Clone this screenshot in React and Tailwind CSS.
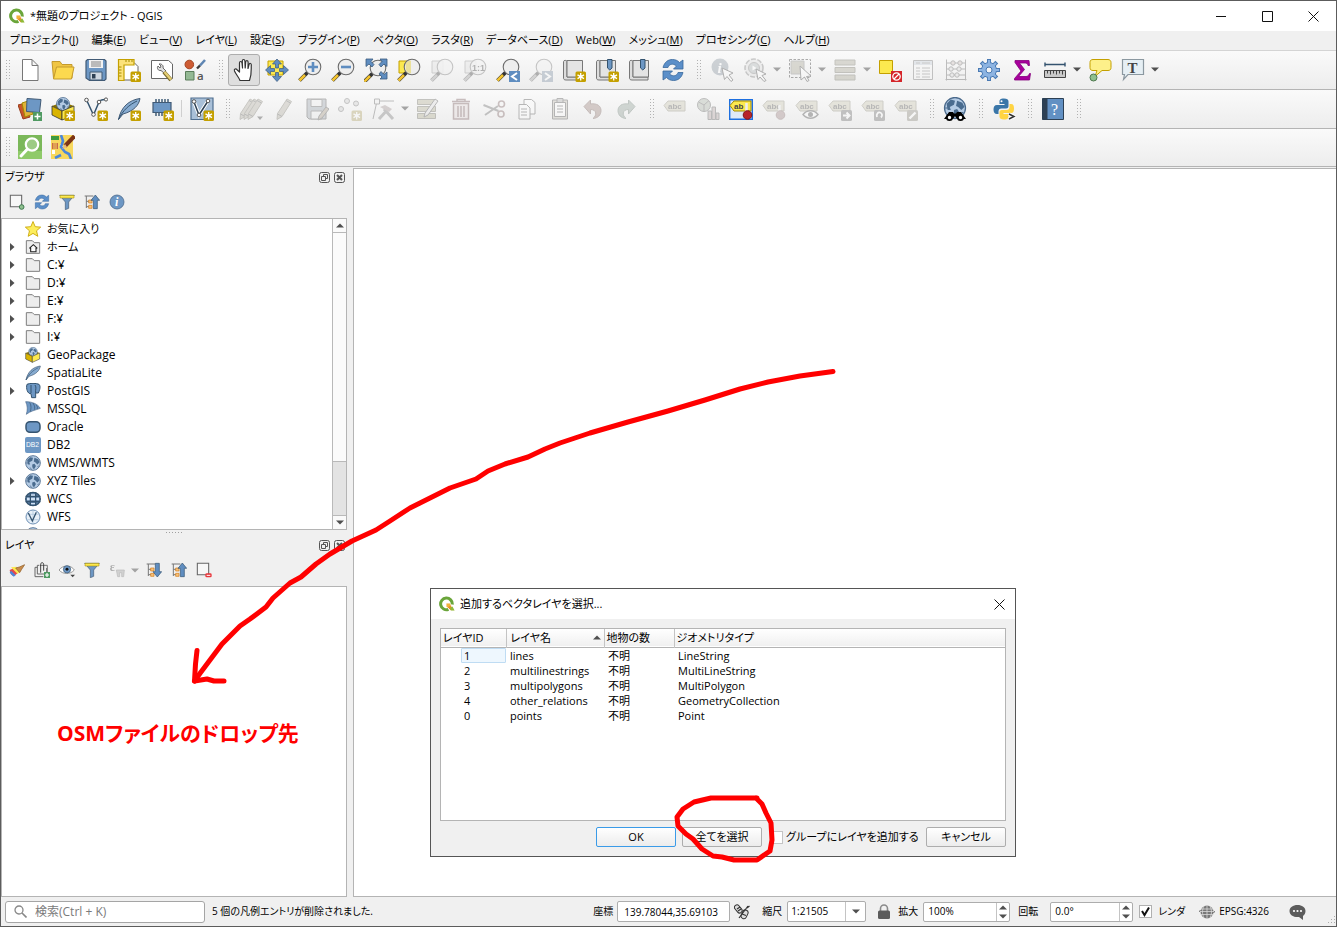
import React from "react";

/* ---------- shared drawing parts ---------- */

function Svg({ children, size = 24, off = false }) {
  return (
    <svg width={size} height={size} viewBox="0 0 24 24" fill="none" aria-hidden="true" className={off ? "shrink-0 grayscale-[60%] opacity-35" : "shrink-0"}>
      {children}
    </svg>
  );
}

const Star = () => (
  <g>
    <rect x="13.5" y="13.5" width="10.5" height="10.5" rx="1.5" fill="#c4a000" />
    <path d="M18.7 15v7.500M15.500 16.900l6.500 3.700M22 16.900l-6.500 3.700" stroke="#fff" strokeWidth="1.300" />
    <circle cx="18.7" cy="18.7" r="1.6" fill="#fff" />
  </g>
);

const Lens = ({ gold = true, children }) => (
  <g>
    <path d="M1.500 22.500l8-8" stroke="#333" strokeWidth="3.800" />
    <path d="M1.500 22.500l5.500-5.500" stroke={gold ? "#f3c32e" : "#999"} strokeWidth="2.600" />
    <circle cx="15" cy="9" r="7.8" fill="#ececec" fillOpacity=".85" stroke="#6c6c6c" strokeWidth="1.1" />
    {children}
  </g>
);

const Tag = ({ bright }) => (
  <g>
    <path d="M1 8.500l4-4.500h17v10H5z" fill={bright ? "#fce94f" : "#cfc48a"} stroke={bright ? "#a38a00" : "#8d865c"} />
    <text x="5" y="12" fontSize="8" fontWeight="700" fontFamily="Liberation Sans, sans-serif" fill="#444">{bright ? "ab" : "abc"}</text>
  </g>
);

const Globe = ({ cx = 12, cy = 12, r = 9.5 }) => (
  <g transform={`translate(${cx} ${cy}) scale(${r / 10})`}>
    <circle r="10" fill="#b4cbe4" stroke="#4b6a8c" strokeWidth="1.200" />
    <path d="M-8-4l4-4 4 1-1 4-4 2 1 3-3 0zM-1 2l3-1 2 3-2 4-2 0-1-3zM2-7l5 2 2 4-3 3-3-3-2-1z" fill="#4a6c8f" />
    <path d="M-9.500 0h4M-4 6l2 3M6 5l2-1" stroke="#4b6a8c" />
  </g>
);

const Pencil = ({ x = 0 }) => (
  <g transform={`translate(${x} 0)`}>
    <path d="M5 22.500l.5-6L15 2l4.500 2.500L10 19.500z" fill="#b5ab8a" stroke="#7a7356" strokeWidth="1" />
    <path d="M14 3.500l4.500 2.500M5.500 17l4.500 2.500" stroke="#555" />
  </g>
);

const MapSheet = () => (
  <g>
    <path d="M1.500 3.500C1.500 2 5 2 5 3.500V19h15v3H4c-2 0-2.500-1-2.500-2z" fill="#ddd" stroke="#777" />
    <path d="M5 2.500h15.500V19H5z" fill="#e4e4e4" stroke="#777" />
  </g>
);

/* ---------- icons ---------- */

const icons = {
  newFile: <path d="M4.500 1.500H14L20 7.500V22.500H4.500zM14 1.500V7.500H20" fill="#fff" stroke="#777" strokeLinejoin="round" />,
  open: (
    <g stroke="#c49a2c" strokeLinejoin="round">
      <path d="M1 3.500h8l2 3h10V20H2.500z" fill="#f0c542" />
      <path d="M5.500 9H23l-2.500 12H2.500z" fill="#fcd94f" />
    </g>
  ),
  save: (
    <g>
      <path d="M3.500 1.500h17l1.500 1.500V21l-1.500 1.500h-15L2 20V3z" fill="#6d97c4" stroke="#415a75" strokeWidth="1.200" />
      <path d="M5 2h14v8H5z" fill="#f2f2f2" />
      <path d="M7 4h10M7 6h10M7 8h10" stroke="#777" strokeWidth=".9" />
      <path d="M6 14h12v8H6z" fill="#cfd8e2" stroke="#415a75" />
      <path d="M8 16h3.500v4.500H8z" fill="#2d4054" />
    </g>
  ),
  layout: (
    <g>
      <path d="M6 4.500h11l4 4V22H6z" fill="#fff" stroke="#666" />
      <path d="M1.500 1.500h15.500V7H7v15.500H1.500z" fill="#fce27a" stroke="#c4a000" strokeWidth="1.200" />
      <path d="M2 9h2.500M2 12h2.500M2 15h2.500M2 18h2.500M9 2v2M12 2v2M15 2v2" stroke="#a38a00" />
      <Star />
    </g>
  ),
  settings: (
    <g>
      <path d="M1.500 2.500h17L22.500 6v14.500h-21z" fill="#fff" stroke="#666" />
      <path d="M8 8c-1.500 2 0 5 3 4.500L14 15l2-2-3-3c.8-3-2-4.500-4-4l2 2-1 2z" fill="#e0e0e0" stroke="#666" />
      <path d="M14 14l7 8" stroke="#7a6a2c" strokeWidth="4" />
      <path d="M14.500 14l6.500 7.500" stroke="#e6cf74" strokeWidth="2.400" />
    </g>
  ),
  style: (
    <g>
      <circle cx="6.300" cy="6.500" r="4.300" fill="#cd5c33" stroke="#a3431f" />
      <path d="M22 2l-5 5.500" stroke="#5f86b3" strokeWidth="2.600" />
      <path d="M17 7.500l-3 3" stroke="#3a3a3a" strokeWidth="2.400" />
      <path d="M2.500 13.500h8.500v8.500H2.500z" fill="#94b994" stroke="#5a7d5a" />
      <text x="14" y="22" fontSize="11.500" fontFamily="Open Sans, sans-serif" fontWeight="600" fill="#555">a</text>
    </g>
  ),
  hand: (
    <path d="M8 22.500c-1-3-4-6-5.500-9.500-.7-2 1.300-3 2.500-1.300L7.500 14V5c0-2 2.200-2 2.500 0l.5 5-.2-7c0-2 2.500-2 2.600 0l.3 7 .5-6c.2-2 2.500-1.700 2.400.2L16 10.500l1-4c.5-1.700 2.500-1.200 2.300.5C19 11 20 16 17.500 22.500z" fill="#fff" stroke="#333" strokeWidth="1.200" strokeLinejoin="round" />
  ),
  pan: (
    <g>
      <path d="M3 3h15v14H3z" fill="#fce94f" stroke="#c4a000" />
      <path d="M12 1l4.500 5H13.500v4h-3V6h-3zM12 23.500l4.500-5h-3v-4h-3v4h-3zM.5 12l5-4.500v3h4v3h-4v3zM23.500 12l-5-4.500v3h-4v3h4v3z" fill="#5f8dc0" stroke="#3a5a7d" strokeWidth=".7" />
    </g>
  ),
  zoomIn: <Lens><path d="M15 4v10M10 9h10" stroke="#5f8dc0" strokeWidth="2.600" /></Lens>,
  zoomOut: <Lens><path d="M10 9h10" stroke="#5f8dc0" strokeWidth="2.600" /></Lens>,
  zoomFull: (
    <g>
      <g transform="translate(-1 1)"><Lens /></g>
      <path d="M2 1h7L7 3.500l3 3L8 9 5 6 2 8.500zM23 1h-7l2 2.500-3 3L17 9l3-3 3 2.500zM23 21h-7l2-2-3-3 2-2.500 3 3 3-2.500z" fill="#5f8dc0" stroke="#3a5a7d" strokeWidth=".8" />
    </g>
  ),
  zoomSel: <g><path d="M2 3h11v12H2z" fill="#fce94f" stroke="#c4a000" /><Lens><path d="M9 5a7 7 0 0 1 5-2.500v13A7 7 0 0 1 9 12z" fill="#e9dd80" fillOpacity=".7" /></Lens></g>,
  zoomLayer: <g><path d="M2 3h11v12H2z" fill="#ddd" stroke="#888" /><Lens gold={false} /></g>,
  zoomNative: <g><path d="M2 3h11v12H2z" fill="#ddd" stroke="#888" /><Lens gold={false}><text x="9" y="12.500" fontSize="9" fontWeight="700" fontFamily="Liberation Sans, sans-serif" fill="#333">1:1</text></Lens></g>,
  zoomPrev: <g><Lens /><path d="M13 13h11v11H13z" fill="#5f8dc0" /><path d="M21 15l-5 3.500 5 3.500" stroke="#fff" strokeWidth="2" /></g>,
  zoomNext: <g><Lens gold={false} /><path d="M13 13h11v11H13z" fill="#5f8dc0" /><path d="M16 15l5 3.500-5 3.500" stroke="#fff" strokeWidth="2" /></g>,
  mapNew: <g><MapSheet /><Star /></g>,
  markNew: <g><MapSheet /><path d="M12.500 1.500H17V10l-2.200 2-2.300-2z" fill="#6d97c4" stroke="#34536f" /><Star /></g>,
  marks: <g><MapSheet /><path d="M12.500 1.500H17V10l-2.200 2-2.300-2z" fill="#6d97c4" stroke="#34536f" /></g>,
  refresh: (
    <g fill="#5b8fc9" stroke="#39689c" strokeWidth=".8" strokeLinejoin="round">
      <path d="M2 9.500C3.500 4 7 1.500 11.500 1.500c3 0 5 1 7 3L22 2v9h-9.500l3-3C12 5 8 6 7 9.500z" />
      <path d="M22 14.500C20.500 20 17 22.500 12.500 22.500c-3 0-5-1-7-3L2 22v-9h9.500l-3 3c3.500 3 7.500 2 8.500-1.500z" />
    </g>
  ),
  identify: <g><circle cx="10" cy="9" r="8.500" fill="#6f8dad" /><text x="7.500" y="14.500" fontSize="15" fontWeight="700" fontStyle="italic" fontFamily="Liberation Serif, serif" fill="#fff">i</text><path d="M12 10l11 5-4 2 4 5-2 1.500-4-5-2.500 3z" fill="#fff" stroke="#333" /></g>,
  action: <g><circle cx="11" cy="10" r="9" fill="#ddd" stroke="#777" strokeWidth="1.600" strokeDasharray="5 1.500" /><circle cx="11" cy="10" r="5.500" fill="#9fb0b3" stroke="#777" /><path d="M9.500 7.500l4 2.500-4 2.500z" fill="#fff" /><path d="M13 11l10 5-4 1.500 4 5-2 1-4-4.500-2 2.500z" fill="#fff" stroke="#333" /></g>,
  select: <g><path d="M1.500 1.500h21v18h-21z" stroke="#222" strokeDasharray="2.500 1.500" /><path d="M3 3h13v13H3z" fill="#a9a172" stroke="#777" /><path d="M12 8l11 10-4.500.5 2.500 4-2 1-2.500-4.500L13 22z" fill="#fff" stroke="#333" /></g>,
  selectForm: <path d="M2 2h20v5H2zM2 9.500h20v5H2zM2 17h20v5H2z" fill="#a9a172" stroke="#6d6848" />,
  deselect: <g><path d="M1.500 2.500h13v13h-13z" fill="#fce94f" stroke="#c4a000" /><path d="M13 13h11v11H13z" fill="#d4252a" /><circle cx="18.500" cy="18.500" r="3.700" stroke="#fff" strokeWidth="1.300" /><path d="M16 21l5-5" stroke="#fff" strokeWidth="1.300" /></g>,
  tableIcon: <g><path d="M2.500 2.500h19v19h-19z" fill="#f5f5f5" stroke="#666" /><path d="M3 3h18v4H3z" fill="#b7cde4" /><path d="M5 5h4M11 5h8M5 10h4M11 10h8M5 13h4M11 13h8M5 16h4M11 16h8M5 19h4M11 19h8" stroke="#777" /></g>,
  abacus: <g stroke="#555"><path d="M2.500 1.500v21M21.500 1.500v21M1.500 21.500h21M2 5h20M2 11h20M2 17h20" /><g fill="#d9b8b0"><circle cx="9" cy="5" r="2.200" /><circle cx="16" cy="5" r="2.200" /></g><g fill="#d9d9d9"><circle cx="7" cy="11" r="2.200" /><circle cx="15" cy="11" r="2.200" /><circle cx="8" cy="17" r="2.200" /><circle cx="13" cy="17" r="2.200" /></g></g>,
  gear: (
    <g>
      <path d="M12 1v22M1 12h22M4.200 4.200l15.600 15.600M19.800 4.200L4.200 19.800" stroke="#4a7ab3" strokeWidth="4" />
      <circle cx="12" cy="12" r="7.500" fill="#8db4e2" stroke="#4a7ab3" />
      <path d="M12 2v20M2 12h20M5 5l14 14M19 5L5 19" stroke="#8db4e2" strokeWidth="2.200" />
      <circle cx="12" cy="12" r="6.500" fill="#8db4e2" />
      <circle cx="12" cy="12" r="3" fill="#f5f5f5" stroke="#4a7ab3" />
    </g>
  ),
  sigma: <path d="M5 2.500h14l.5 5h-1.500c-.5-2-1.500-2.500-3-2.500h-5.500l5 6.500-6 7H16c2 0 2.500-1 3.500-3h1L19.500 22H4.500v-1.500L11 13 5 4.500z" fill="#a8009c" stroke="#84007c" strokeWidth=".8" />,
  measure: <g><path d="M2 6.500h20M2 4.500v4M22 4.500v4" stroke="#34536f" strokeWidth="1.400" /><path d="M1.500 12.500h21v7h-21z" fill="#c9c9c9" stroke="#444" /><path d="M4.500 12.500v3M7.500 12.500v4M10.500 12.500v3M13.500 12.500v4M16.500 12.500v3M19.500 12.500v4" stroke="#444" /></g>,
  mapTip: <g><path d="M5 1.500h15c2 0 3 1.500 3 3v5c0 2-1 3-3 3h-6l-7 6 2-6H5c-2 0-3-1-3-3v-5c0-2 1-3 3-3z" fill="#fdf08a" stroke="#c4a000" /><circle cx="5.500" cy="19.500" r="3.500" fill="#8fc08f" stroke="#4e774e" /></g>,
  textNote: <g><path d="M1.500 1.500h21v15H7l-4.500 5 1-5h-2z" fill="#e6eff4" stroke="#8b98a0" strokeWidth="1.200" /><text x="6.500" y="14.500" fontSize="15" fontFamily="Liberation Serif, serif" fontWeight="700" fill="#444">T</text></g>,

  dataSource: <g><path d="M0 8l8-2 4 14-7 2z" fill="#c9562b" stroke="#983d1c" /><path d="M4 6l9-3 2 14-8 3z" fill="#e0b33a" stroke="#a38a00" /><path d="M9 1.500l14 1-1.500 13-13-1z" fill="#6d97c4" stroke="#415a75" /><path d="M15 15h9v9h-9z" fill="#4f9a62" /><path d="M19.500 16.500v6M16.500 19.500h6" stroke="#fff" strokeWidth="1.500" /></g>,
  geopackage: <g><path d="M1 9l11-4 10 4-11 5z" fill="#8a7200" /><Globe cx={12} cy={7} r={6.500} /><path d="M1 9l10 5v9L1 18z" fill="#d9b400" stroke="#333" strokeWidth=".8" /><path d="M11 14l11-5v9l-11 5z" fill="#fce94f" stroke="#333" strokeWidth=".8" /></g>,
  geopackageNew: <g><path d="M1 9l11-4 11 4-12 5z" fill="#8a7200" /><Globe cx={12} cy={7} r={6.500} /><path d="M1 9l10 5v9L1 18z" fill="#d9b400" stroke="#333" strokeWidth=".8" /><path d="M11 14l12-5v9l-12 5z" fill="#fce94f" stroke="#333" strokeWidth=".8" /><Star /></g>,
  shape: <g stroke="#34536f"><path d="M3 4l6.500 14L15 5c1-2 3-2.500 6-2.500" strokeWidth="1.500" /><g fill="#fff" stroke="#555"><circle cx="2.500" cy="3" r="1.800" /><circle cx="9.500" cy="17.500" r="1.800" /><circle cx="15" cy="5" r="1.800" /><circle cx="22" cy="2.500" r="1.600" /></g><g stroke="none"><Star /></g></g>,
  feather: <g><path d="M1.500 22.500C4 10 12 3 23 1.500 22 8 17 14 6 17z" fill="#87abd0" stroke="#415a75" /><path d="M1.500 22.500C6 13 12 8 20 4" stroke="#34536f" /></g>,
  featherNew: <g><path d="M1.500 22.500C4 10 12 3 23 1.500 22 8 17 14 6 17z" fill="#87abd0" stroke="#415a75" /><path d="M1.500 22.500C6 13 12 8 20 4" stroke="#34536f" /><Star /></g>,
  memory: <g><path d="M6 2v17M9 2v17M12 2v17M15 2v17M18 2v17" stroke="#34536f" strokeWidth="1.400" /><path d="M3 5.500h18v10H3z" fill="#6d97c4" stroke="#415a75" strokeWidth="1.200" /><Star /></g>,
  virtual: <g><path d="M1 1h22v21.500H1z" fill="#a9c0d8" stroke="#506f90" strokeWidth="1.200" /><path d="M4 5l5 13 9-14" stroke="#fff" strokeWidth="3.500" /><path d="M4 5l5 13 9-14" stroke="#2d4054" strokeWidth="1.500" /><g fill="#fff" stroke="#555"><circle cx="4" cy="4.500" r="1.800" /><circle cx="9" cy="18" r="1.800" /><circle cx="18" cy="4" r="1.800" /></g><Star /></g>,

  pencils: <g><Pencil x={-4} /><Pencil x={0} /><Pencil x={4} /></g>,
  pencil: <Pencil />,
  saveEdit: <g><path d="M2 2h19v20H4l-2-2z" fill="#8ba1ba" stroke="#444" /><path d="M6 2.500h11v7H6zM6 14h11v8H6z" fill="#eee" stroke="#555" /><path d="M13 23l1-4 7-9 3 2-7 9z" fill="#b3935f" stroke="#444" /></g>,
  points: <g><g fill="#ccc" stroke="#666"><circle cx="9" cy="4" r="2.500" /><circle cx="18" cy="6.500" r="2.500" /><circle cx="3" cy="12" r="2.500" /></g><Star /></g>,
  vertex: <g><path d="M2 22L6 4h17" stroke="#555" /><path d="M3.500 2h5v5h-5z" fill="#eee" stroke="#555" /><path d="M8 22L18 11M13 12l9 10" stroke="#777" strokeWidth="3" /><path d="M9 10l5-2 7 4-3 3z" fill="#a88" /></g>,
  multiEdit: <g><path d="M1.500 2.500h18v5h-18zM1.500 9.500h18v5h-18zM1.500 16.500h18v5h-18z" fill="#b5ad62" stroke="#676547" /><path d="M8 20l1-4L19 2l3 2-10 14z" fill="#ddd" stroke="#444" /></g>,
  trash: <g fill="none" stroke="#94494c" strokeWidth="1.500"><path d="M4.500 6.500h15V22h-15z" fill="#eed3d3" /><path d="M3 4.500h18M8 4.500v-2h8v2M9 9v11M12 9v11M15 9v11" /></g>,
  cut: <g><path d="M1.500 8l15 6M3 18L16 9" stroke="#666" strokeWidth="2" /><g stroke="#955" strokeWidth="1.600"><circle cx="19.500" cy="7" r="3" /><circle cx="19" cy="17" r="3" /></g></g>,
  copy: <g fill="#fff" stroke="#444"><path d="M9 2.500h7.500l3.500 3V17H9z" /><path d="M4 7.500h7.500l3.500 3.500v11H4z" /><path d="M6 12h6M6 15h6M6 18h6" /></g>,
  paste: <g stroke="#444"><path d="M4.500 3h15v19h-15z" fill="#c6bd9f" /><path d="M6.500 5.500h11v14h-11z" fill="#fff" /><path d="M9 1.500h6v4H9z" fill="#aaa" /><path d="M9 9h6M9 12h6M9 15h6" /></g>,
  undo: <path d="M3 9.500l6.500-6.500v4C16 6 20 9 20 13.500S17 21 12 21.500c4-3 4-9-2.500-9V17z" fill="#b87460" stroke="#8b4e40" />,
  redo: <path d="M21 9.500L14.500 3v4C8 6 4 9 4 13.500S7 21 12 21.500c-4-3-4-9 2.500-9V17z" fill="#79a08a" stroke="#4e7a62" />,

  label: <Tag />,
  diagram: <g stroke="#555"><circle cx="8" cy="8" r="6.500" fill="#9db392" /><path d="M8 8l5-4.500M8 8L2.500 5M8 8v6.500" /><path d="M12 14h3.500v8.500H12zM16 10h3.500v12.500H16zM20 16h3v6.500h-3z" fill="#c79c9c" /></g>,
  pinLabel: <g><path d="M.7 2.700h22.600v19.600H.7z" stroke="#1d6fe0" strokeWidth="1.400" fill="#dfe9f7" /><Tag bright /><path d="M17.500 6v9" stroke="#eee" strokeWidth="2.500" /><circle cx="18.500" cy="18" r="4.300" fill="#b8242a" stroke="#7d1418" /></g>,
  labelPin: <g><Tag /><path d="M17.500 8v8" stroke="#eee" strokeWidth="2.500" /><circle cx="18.500" cy="18" r="4.300" fill="#b77" stroke="#955" /></g>,
  labelEye: <g><Tag /><path d="M8 17.500c4-5 11-5 15 0-4 5-11 5-15 0z" fill="#fff" stroke="#444" strokeWidth="1.400" /><circle cx="15.500" cy="17.500" r="2.500" fill="#444" /></g>,
  labelMove: <g><Tag /><rect x="13" y="13" width="11" height="11" rx="1.500" fill="#666" /><path d="M15 18.500h6M18.500 15.500l3 3-3 3" stroke="#fff" strokeWidth="2" /></g>,
  labelRotate: <g><Tag /><rect x="13" y="13" width="11" height="11" rx="1.500" fill="#666" /><path d="M16 20c-1-3 1-5 3-4.500s3 3 1 5" stroke="#fff" strokeWidth="1.800" /></g>,
  labelEdit: <g><Tag /><rect x="13" y="13" width="11" height="11" rx="1.500" fill="#8a8463" /><path d="M15.500 21.500l6-6" stroke="#fff" strokeWidth="2.400" /></g>,
  metaSearch: <g><Globe cx={12} cy={11} r={10.500} /><path d="M6 15h4l1 1.500h2L14 15h4l5 7h-9l-2-3-2 3H1z" fill="#000" /><circle cx="6.500" cy="20.500" r="2.600" fill="#fff" stroke="#000" strokeWidth="1.800" /><circle cx="17.500" cy="20.500" r="2.600" fill="#fff" stroke="#000" strokeWidth="1.800" /></g>,
  python: (
    <g>
      <path d="M12 1.500c-4 0-4.500 1.500-4.500 3V7h5v1H5C2.500 8 1.500 10 1.500 12.500S2.500 17 5 17h1.500v-2.500c0-2 1-3 3-3H14c2 0 2.500-1 2.500-2.500V4.500c0-2-1.500-3-4.500-3z" fill="#3a76a8" />
      <path d="M12 22.500c4 0 4.500-1.500 4.500-3V17h-5v-1H19c2.500 0 3-2 3-4.500S21.500 7 19 7h-1.500v3c0 2-1 3-3 3H10c-2 0-2.500 1-2.500 2.500v4c0 2 1.500 3 4.500 3z" fill="#ffd443" />
      <circle cx="9.500" cy="4.300" r="1" fill="#fff" />
      <path d="M17 17l5 2.500-5 2.500" stroke="#fff" strokeWidth="3.500" /><path d="M17 17l5 2.500-5 2.500" stroke="#333" strokeWidth="1.500" />
    </g>
  ),
  help: <g><path d="M1.500 1.500h21v21h-21z" fill="#6290c3" stroke="#2d4054" /><path d="M1.500 1.500h5v21h-5z" fill="#2d4054" /><text x="10" y="17.500" fontSize="16" fontFamily="Liberation Serif, serif" fill="#fff">?</text></g>,

  osmFind: <g><path d="M0 0h24v24H0z" fill="#7bb85a" /><path d="M0 16h24v8H0z" fill="#8fca69" /><path d="M3 21l6-6.500" stroke="#fff" strokeWidth="3" strokeLinecap="round" /><circle cx="14" cy="9.500" r="6.200" stroke="#fff" strokeWidth="2.200" fill="#9ccb84" /></g>,
  osmEdit: <g><path d="M0 0h22v24H0z" fill="#f7d85e" /><path d="M0 1h8v4H0z" fill="#3f9b3f" /><path d="M1 15h3v4H1zM9 9h3v3H9z" fill="#fff" /><path d="M10 0l2 6-2 6 4 5 4 2 2 5M10 20l-6 3" stroke="#4a87dc" strokeWidth="2.600" /><path d="M1 8h6v6H1z" fill="#c96a4a" /><path d="M3 8v6M5 8v6" stroke="#f7d85e" /><path d="M23.500 1L14 11" stroke="#7c3414" strokeWidth="4" /><path d="M14 9l-3 5 5-2z" fill="#e4b57e" /></g>,

  addLayer: <g><path d="M2 2h17v17H2z" stroke="#666" strokeWidth="1.600" fill="#f7f7f7" /><circle cx="19" cy="19.500" r="3.500" fill="#8fc08f" stroke="#3f7a4f" strokeWidth="1.500" /></g>,
  removeLayer: <g><path d="M2 2h17v17H2z" stroke="#666" strokeWidth="1.600" fill="#f7f7f7" /><rect x="14" y="17" width="9.500" height="6" rx="2" fill="#e8363b" /><path d="M16 20h5.500" stroke="#fff" strokeWidth="1.500" /></g>,
  filter: <g><path d="M1 2h22l-8.500 10v9.500l-5 2V12z" fill="#6d97c4" stroke="#415a75" /><path d="M1.500 2h21v4h-21z" fill="#fce94f" stroke="#a38a00" strokeWidth=".8" /></g>,
  collapse: <g><path d="M1 3h13M3.500 3v18M3.500 11h4M3.500 19h4" stroke="#777" strokeWidth="1.500" /><path d="M7 9h5v4.500H7zM7 17h5v4.500H7z" fill="#f6c27c" stroke="#d57a13" /><path d="M17 1.500l6.500 8H20V22h-6V9.500h-3.500z" fill="#5f8dc0" stroke="#34536f" /></g>,
  expand: <g><path d="M1 3h13M3.500 3v18M3.500 11h4M3.500 19h4" stroke="#777" strokeWidth="1.500" /><path d="M7 9h5v4.500H7zM7 17h5v4.500H7z" fill="#f6c27c" stroke="#d57a13" /><path d="M17 22.500l6.500-8H20V2h-6v12.500h-3.500z" fill="#5f8dc0" stroke="#34536f" /></g>,
  info: <g><circle cx="12" cy="12" r="10.500" fill="#6d97c4" stroke="#4b6a8c" strokeWidth="1.200" /><text x="9" y="18" fontSize="18" fontWeight="700" fontStyle="italic" fontFamily="Liberation Serif, serif" fill="#fff">i</text></g>,
  brush: <g><path d="M1 12l9-4 6 6-8 7c-4 0-6-3-7-9z" fill="#e5484d" /><path d="M3 8l8-1 6 6-4 5z" fill="#fce94f" /><path d="M1 16l6 6 3-2-7-7z" fill="#4a87dc" /><path d="M10 9l6 7 3-5 4.500-7-8 3.500z" fill="#c98c4a" stroke="#8d5a24" /></g>,
  addGroup: <g><path d="M5 8H1.500v14H14M8 5H5v13h14V9" stroke="#666" strokeWidth="1.500" /><path d="M9 5h11v12" stroke="#777" strokeWidth="1.500" /><path d="M10 16V4c0-4 4.500-4 4.500 0v9" stroke="#333" strokeWidth="1.400" /><path d="M15 15h9v9h-9z" fill="#4f9a62" /><path d="M19.500 16.500v6M16.500 19.500h6" stroke="#fff" strokeWidth="1.800" /></g>,
  eye: <g><path d="M0 12C6 4 18 4 23 12 17 19 6 19 0 12z" fill="#fff" stroke="#999" strokeWidth="1.500" /><circle cx="12" cy="11" r="5.500" fill="#6d97c4" stroke="#34536f" /><circle cx="12" cy="11" r="2.200" fill="#111" /><path d="M17 19h7l-3.500 4z" fill="#444" /></g>,
  expression: <g><text x="1" y="14" fontSize="18" fontWeight="700" fontFamily="Liberation Serif, serif" fill="#333">ε</text><path d="M11 12h12l-1 10h-3v-6h-3v6h-3z" fill="#999" stroke="#555" /></g>,

  star: <path d="M12 .8l3.300 7.700 8.200.7-6.200 5.500 1.900 8.300L12 18.600 4.800 23l1.900-8.300L.5 9.200l8.200-.7z" fill="#fdee5c" stroke="#c9a400" strokeWidth="1.300" strokeLinejoin="round" />,
  folder: <path d="M2 2.500h9l3 3h8v16H2z" fill="#ededed" stroke="#7d7d7d" strokeWidth="1.500" strokeLinejoin="round" />,
  home: <g><path d="M2 2.500h9l3 3h8v16H2z" fill="#ededed" stroke="#7d7d7d" strokeWidth="1.500" /><path d="M6.500 14L12.500 8.500l6 5.500M8.500 13v6h8v-6" stroke="#222" strokeWidth="1.600" fill="#fff" /></g>,
  postgis: <g><path d="M3 2c4-2 14-2 18 0 3 3 1 9-1 13h-4v7h-6l-1-6c-5 1-8-8-6-14z" fill="#6d97c4" stroke="#34536f" strokeWidth="1.500" /><path d="M9 3v12M15 3c3 4 0 7 1 12" stroke="#34536f" strokeWidth="1.500" /></g>,
  mssql: <g><path d="M1 1c9 0 18 3 22 10-8 3-15 4-21 9 2-6 2-13-1-19z" fill="#6d97c4" stroke="#4b6a8c" /><path d="M7 2c3 5 2 10 1 14M12 3c3 5 3 7 2 10M17 6c2 3 2 4 1 6" stroke="#34536f" /></g>,
  oracle: <rect x="1.500" y="4" width="21" height="16" rx="6" fill="#6d97c4" stroke="#34536f" strokeWidth="2.200" />,
  db2: <g><rect width="24" height="24" rx="3" fill="#6d97c4" /><text x="1.500" y="15" fontSize="10" fontFamily="Liberation Sans, sans-serif" fill="#fff">DB2</text></g>,
  globe: <Globe r={11} />,
  wcs: <g><ellipse cx="12" cy="12" rx="11" ry="10" fill="#5c7fa5" stroke="#34536f" strokeWidth="2" /><path d="M1 8h22M1 16h22M8 2v20M16 2v20" stroke="#34536f" strokeWidth="2" /><path d="M9 5h6v2H9zM9 10h6v4H9zM3 10h4v4H3zM17 10h4v4h-4zM9 18h6v2H9z" fill="#cfe0f2" /></g>,
  wfs: <g><circle cx="12" cy="12" r="10.500" fill="#e8f0f8" stroke="#6d8fb4" strokeWidth="1.500" /><path d="M2 8h20M2 16h20M12 2v20" stroke="#a8c1da" /><path d="M5 6l6 12 6-13" stroke="#34536f" strokeWidth="2" /></g>,
};

const Logo = () => (
  <svg width="16" height="16" viewBox="0 0 16 16" fill="none" aria-hidden="true" className="shrink-0">
    <path d="M13.200 8.500A5.800 5.800 0 1 0 9.500 13.300" stroke="#6aa53a" strokeWidth="3" />
    <path d="M7.500 7.500h3.300l4.700 7H11.500L7.500 10.500z" fill="#e8912d" stroke="#fff" strokeWidth=".8" />
    <path d="M7.500 7.500h3.300l1 1.500-3 2.500-1.300-1z" fill="#f2b23a" />
    <path d="M11 12l2.500-1.500 2 4H12z" fill="#8dbb3a" />
  </svg>
);

/* ---------- toolbars ---------- */

const t = (icon, label, opt = {}) => ({ icon, label, ...opt });
const H = { kind: "handle" };
const S = { kind: "sep" };
const off = { off: true };

const rowOne = [
  t("newFile", "新規"), t("open", "開く"), t("save", "保存"), t("layout", "新規レイアウト"), t("settings", "レイアウトマネージャ"), t("style", "スタイルマネージャ"),
  H, t("hand", "地図を移動", { active: true }), t("pan", "選択部分に移動"), t("zoomIn", "拡大"), t("zoomOut", "縮小"), t("zoomFull", "全域表示"), t("zoomSel", "選択部分にズーム"), t("zoomLayer", "レイヤにズーム", off), t("zoomNative", "ネイティブ解像度", off), t("zoomPrev", "前の表示領域"), t("zoomNext", "次の表示領域", off), t("mapNew", "新規地図ビュー"), t("markNew", "新規ブックマーク"), t("marks", "ブックマーク"), t("refresh", "再読み込み"),
  H, t("identify", "地物情報", off), t("action", "アクション", { off: true, drop: true }), t("select", "地物選択", { off: true, drop: true }), t("selectForm", "値による選択", { off: true, drop: true }), t("deselect", "選択解除"), t("tableIcon", "属性テーブル", off), t("abacus", "フィールド計算機", off), t("gear", "ツールボックス"), t("sigma", "統計"), t("measure", "計測", { drop: true }), t("mapTip", "マップチップ"), t("textNote", "テキスト注釈", { drop: true }),
];

const rowTwo = [
  t("dataSource", "データソースマネージャ"), t("geopackageNew", "新規GeoPackage"), t("shape", "新規シェープファイル"), t("featherNew", "新規SpatiaLite"), t("memory", "一時レイヤ"), S, t("virtual", "仮想レイヤ"),
  H, t("pencils", "現在の編集", { off: true, mini: true }), t("pencil", "編集モード切替", off), t("saveEdit", "編集を保存", off), t("points", "点を追加", off), t("vertex", "頂点ツール", { off: true, drop: true }), t("multiEdit", "一括変更", off), t("trash", "削除", off), t("cut", "切り取り", off), t("copy", "コピー", off), t("paste", "貼り付け", off), t("undo", "元に戻す", off), t("redo", "やり直す", off),
  H, t("label", "ラベル", off), t("diagram", "ダイアグラム", off), t("pinLabel", "固定ラベルを強調"), t("labelPin", "ラベル固定", off), t("labelEye", "ラベル表示", off), t("labelMove", "ラベル移動", off), t("labelRotate", "ラベル回転", off), t("labelEdit", "ラベル変更", off),
  H, t("metaSearch", "メタサーチ"), H, t("python", "Pythonコンソール"), H, t("help", "ヘルプ"), H,
];

const rowThree = [t("osmFind", "OSM検索"), t("osmEdit", "OSM編集")];

const Handle = ({ first }) => (
  <span className={first ? "flex w-3 shrink-0 items-center justify-center pl-0.5" : "flex w-4 shrink-0 items-center justify-center pl-1"}>
    <svg width="5" height="20" viewBox="0 0 5 20" aria-hidden="true">
      {[0, 3, 6, 9, 12, 15, 18].map((y) => (
        <path key={y} d={`M0 ${y}h1v1h-1zM3 ${y}h1v1h-1z`} fill="#b2b2b2" />
      ))}
    </svg>
  </span>
);

const Down = ({ dim }) => (
  <svg width="8" height="5" viewBox="0 0 8 5" aria-hidden="true" className="shrink-0">
    <path d="M0 .5h8L4 4.500z" fill={dim ? "#a3a3a3" : "#4f4f4f"} />
  </svg>
);

function Toolbar({ items, label }) {
  return (
    <div role="toolbar" aria-label={label} className="flex h-[39px] shrink-0 items-stretch overflow-hidden border-b border-[#b4b4b4] bg-linear-to-b from-[#fafafa] to-[#ededed] pb-px last:h-[38px]">
      <Handle first />
      {items.map((it, i) => {
        if (it.kind === "handle") return <Handle key={i} />;
        if (it.kind === "sep") return <span key={i} className="mx-[3px] my-2.5 w-px shrink-0 bg-[#cfcfcf]" />;
        return (
          <button key={i} type="button" aria-label={it.label} disabled={it.off} className="flex shrink-0 items-center">
            <span className={it.active ? "ml-px flex h-8 w-8 items-center justify-center rounded-[3px] border border-[#adadad] bg-[#dedede]" : "relative flex h-8 w-[33px] items-center justify-center"}>
              <Svg off={it.off}>{icons[it.icon]}</Svg>
              {it.mini && <span className="absolute right-1 bottom-1"><Svg size={6} off><path d="M0 6h24L12 20z" fill="#333" /></Svg></span>}
            </span>
            {it.drop && <span className="flex w-3 items-center justify-center"><Down dim={it.off} /></span>}
          </button>
        );
      })}
    </div>
  );
}

/* ---------- docks ---------- */

const menus = [["プロジェクト", "J"], ["編集", "E"], ["ビュー", "V"], ["レイヤ", "L"], ["設定", "S"], ["プラグイン", "P"], ["ベクタ", "O"], ["ラスタ", "R"], ["データベース", "D"], ["Web", "W"], ["メッシュ", "M"], ["プロセシング", "C"], ["ヘルプ", "H"]];

const tree = [
  ["star", "お気に入り"], ["home", "ホーム", true], ["folder", "C:¥", true], ["folder", "D:¥", true], ["folder", "E:¥", true], ["folder", "F:¥", true], ["folder", "I:¥", true],
  ["geopackage", "GeoPackage"], ["feather", "SpatiaLite"], ["postgis", "PostGIS", true], ["mssql", "MSSQL"], ["oracle", "Oracle"], ["db2", "DB2"], ["globe", "WMS/WMTS"], ["globe", "XYZ Tiles", true], ["wcs", "WCS"], ["wfs", "WFS"], ["globe", ""],
];

function DockTitle({ children }) {
  return (
    <div className="flex h-5 items-center gap-1 pr-[2px] pl-1">
      <h2 className="flex-1">{children}</h2>
      <button type="button" aria-label="フロート">
        <svg width="11" height="11" viewBox="0 0 11 11" fill="none" stroke="#555"><rect x=".5" y=".5" width="10" height="10" rx="2" /><path d="M4.500 4.500v-2h4v4h-2M2.500 4.500h4v4h-4z" /></svg>
      </button>
      <button type="button" aria-label="閉じる">
        <svg width="11" height="11" viewBox="0 0 11 11" fill="none" stroke="#555"><rect x=".5" y=".5" width="10" height="10" rx="2" /><path d="M3 3l5 5M8 3l-5 5" strokeWidth="2" /></svg>
      </button>
    </div>
  );
}

function SmallTool({ icon, label, dim, drop }) {
  return (
    <button type="button" aria-label={label} disabled={dim} className="flex h-6 items-center">
      <span className="flex w-[25px] justify-center"><Svg size={16} off={dim}>{icons[icon]}</Svg></span>
      {drop && <span className="flex w-3 justify-center"><Down dim /></span>}
    </button>
  );
}

function Browser() {
  return (
    <section aria-label="ブラウザ" className="flex shrink-0 flex-col">
      <DockTitle>ブラウザ</DockTitle>
      <div className="flex h-[31px] items-start pt-[3px] pl-[3px]">
        <SmallTool icon="addLayer" label="レイヤを追加" />
        <SmallTool icon="refresh" label="再読み込み" />
        <SmallTool icon="filter" label="フィルタ" />
        <SmallTool icon="collapse" label="すべて折りたたむ" />
        <SmallTool icon="info" label="プロパティ" />
      </div>
      <div className="flex h-[312px] overflow-hidden border border-[#b4b4b4] bg-white">
        <ul className="flex-1 overflow-hidden pt-px">
          {tree.map(([icon, name, more], i) => (
            <li key={i} className="flex h-[18px] items-center">
              <span className="flex w-[23px] pl-2">
                {more && (
                  <button type="button" aria-label={`${name} を展開`}>
                    <svg width="5" height="8" viewBox="0 0 5 8"><path d="M0 0l4.500 4L0 8z" fill="#4f4f4f" /></svg>
                  </button>
                )}
              </span>
              <Svg size={16}>{icons[icon]}</Svg>
              <span className={i < 2 ? "pl-1.5 whitespace-nowrap" : "pl-1.5 text-xs whitespace-nowrap"}>{name}</span>
            </li>
          ))}
        </ul>
        <div className="flex w-[14px] shrink-0 flex-col border-l border-[#b9b9b9] bg-[#e3e3e3]">
          <button type="button" aria-label="上へ" className="flex h-[14px] items-center justify-center border-b border-[#b9b9b9] bg-[#fafafa]"><span className="rotate-180"><Down /></span></button>
          <div className="h-[229px] border-b border-[#b9b9b9] bg-[#fbfbfb]" />
          <div className="flex-1" />
          <button type="button" aria-label="下へ" className="flex h-[14px] items-center justify-center border-t border-[#b9b9b9] bg-[#fafafa]"><Down /></button>
        </div>
      </div>
    </section>
  );
}

function Layers() {
  return (
    <section aria-label="レイヤ" className="flex flex-1 flex-col">
      <DockTitle>レイヤ</DockTitle>
      <div className="flex h-[31px] items-start pt-[3px] pl-[3px]">
        <SmallTool icon="brush" label="スタイル" />
        <SmallTool icon="addGroup" label="グループを追加" />
        <SmallTool icon="eye" label="表示の管理" />
        <SmallTool icon="filter" label="凡例フィルタ" />
        <SmallTool icon="expression" label="式フィルタ" dim drop />
        <SmallTool icon="expand" label="すべて展開" />
        <SmallTool icon="collapse" label="すべて折りたたむ" />
        <SmallTool icon="removeLayer" label="レイヤを削除" />
      </div>
      <div className="flex-1 border border-[#b4b4b4] bg-white" />
    </section>
  );
}

/* ---------- dialog ---------- */

const layers = [["1", "lines", "LineString"], ["2", "multilinestrings", "MultiLineString"], ["3", "multipolygons", "MultiPolygon"], ["4", "other_relations", "GeometryCollection"], ["0", "points", "Point"]];
const pushButton = "h-5 w-20 rounded-[2px] border bg-linear-to-b from-white to-[#ececec] leading-4";

function LayerDialog() {
  return (
    <div role="dialog" aria-labelledby="dlg-title" className="absolute top-[587px] left-[429px] flex w-[586px] flex-col border border-[#555] bg-[#f0f0f0]">
      <div className="flex h-[30px] items-center gap-1 bg-white pr-2.5 pl-2">
        <Logo />
        <h2 id="dlg-title" className="flex-1 pl-px">追加するベクタレイヤを選択...</h2>
        <button type="button" aria-label="閉じる"><svg width="11" height="11" viewBox="0 0 11 11" stroke="#111" fill="none"><path d="M.5.5l10 10M10.500.5l-10 10" /></svg></button>
      </div>
      <div className="m-[9px] mb-1.5 h-[193px] border border-[#b4b4b4] bg-white">
        <table className="w-full table-fixed border-collapse text-left">
          <thead>
            <tr className="h-[18px] border-b border-[#b4b4b4] bg-linear-to-b from-white to-[#f0f0f0] leading-4">
              <th className="w-[65px] border-r border-[#c4c4c4] p-0 pl-0.5 font-normal">レイヤID</th>
              <th className="w-[98px] border-r border-[#c4c4c4] p-0 pr-[3px] pl-1 font-normal" aria-sort="ascending">
                <span className="flex items-center justify-between">レイヤ名<span className="rotate-180"><Down /></span></span>
              </th>
              <th className="w-[70px] border-r border-[#c4c4c4] p-0 pl-0.5 font-normal">地物の数</th>
              <th className="p-0 pl-0.5 font-normal">ジオメトリタイプ</th>
            </tr>
          </thead>
          <tbody>
            {layers.map(([id, name, type], i) => (
              <tr key={id} className="h-[15px] leading-[15px]">
                <td className="p-0 pl-5">
                  <span className={i === 0 ? "block h-[15px] rounded-[1px] bg-[#eef7fe] pl-[3px] outline-1 -outline-offset-1 outline-[#bfdcf3]" : "block h-[15px] pl-[3px]"}>{id}</span>
                </td>
                <td className="p-0 pl-1">{name}</td>
                <td className="p-0 pl-1">不明</td>
                <td className="p-0 pl-1">{type}</td>
              </tr>
            ))}
          </tbody>
        </table>
      </div>
      <div className="flex items-center gap-1.5 pr-[9px] pb-[9px]">
        <span className="flex-1" />
        <button type="button" className={`${pushButton} border-[#3a9be8]`}>OK</button>
        <button type="button" className={`${pushButton} border-[#adadad]`}>全てを選択</button>
        <label className="flex w-[152px] items-center gap-[3px] pl-0.5 whitespace-nowrap">
          <input type="checkbox" className="h-[13px] w-[13px] shrink-0 appearance-none border border-[#c4c4c4] bg-white" />
          グループにレイヤを追加する
        </label>
        <button type="button" className={`${pushButton} border-[#adadad]`}>キャンセル</button>
      </div>
    </div>
  );
}

/* ---------- status bar ---------- */

function Spin({ id, value, wide }) {
  return (
    <span className={`flex h-5 overflow-hidden rounded-[2px] border border-[#adadad] bg-white ${wide ? "w-[87px]" : "w-[83px]"}`}>
      <input id={id} defaultValue={value} className="w-0 flex-1 px-1 outline-none" />
      <span className="flex w-[13px] flex-col items-center justify-center gap-1 border-l border-[#c4c4c4]">
        <button type="button" aria-label="増やす" className="rotate-180"><Down /></button>
        <button type="button" aria-label="減らす"><Down /></button>
      </span>
    </span>
  );
}

function StatusBar() {
  return (
    <footer className="flex h-[29px] shrink-0 items-center overflow-hidden pl-1 text-[10px] whitespace-nowrap">
      <label className="flex h-[22px] w-[200px] items-center gap-2 rounded-[3px] border border-[#a5a5a5] bg-white pl-2">
        <svg width="13" height="13" viewBox="0 0 13 13" fill="none" stroke="#888" aria-hidden="true"><circle cx="5" cy="5" r="4" strokeWidth="1.300" /><path d="M8 8l4.500 4.500" strokeWidth="1.600" /></svg>
        <input aria-label="検索" placeholder="検索(Ctrl + K)" className="w-0 flex-1 text-xs outline-none placeholder:text-[#7a7a7a]" />
      </label>
      <p className="flex-1 pl-[7px]">5 個の凡例エントリが削除されました.</p>
      <label htmlFor="coord" className="pr-1">座標</label>
      <input id="coord" defaultValue="139.78044,35.69103" className="h-[21px] w-[113px] rounded-[2px] border border-[#adadad] bg-white px-1.5" />
      <button type="button" aria-label="範囲の切替" className="mx-1">
        <svg width="16" height="16" viewBox="0 0 16 16" fill="none" stroke="#333" aria-hidden="true"><rect x="2" y="0" width="5" height="9" rx="2.500" transform="rotate(-40 5 5)" fill="#ddd" /><rect x="8" y="6" width="5.500" height="9" rx="2.700" transform="rotate(25 11 10)" fill="#ddd" /><path d="M3 5l3-2M4 7l3-2M8 10l4 1.500M14 2l-9 12M15.500 2L13 4" strokeWidth="1.200" /></svg>
      </button>
      <label htmlFor="scale" className="mr-[5px] ml-2">縮尺</label>
      <span className="relative flex">
        <select id="scale" defaultValue="1:21505" className="h-[21px] w-[79px] appearance-none rounded-[2px] border border-[#adadad] bg-white pl-[3px]">
          <option>1:21505</option>
        </select>
        <span className="pointer-events-none absolute top-px right-px flex h-[19px] w-5 items-center justify-center border-l border-[#c4c4c4]"><Down /></span>
      </span>
      <button type="button" aria-label="縮尺を固定" className="ml-3">
        <svg width="12" height="15" viewBox="0 0 12 15" fill="none" aria-hidden="true"><path d="M2.500 7V4.500a3.500 3.500 0 0 1 7 0V7" stroke="#8a8a8a" strokeWidth="1.600" /><rect y="6.500" width="12" height="8.500" rx="1.500" fill="#5c5c5c" /></svg>
      </button>
      <label htmlFor="mag" className="mr-[5px] ml-2">拡大</label>
      <Spin id="mag" value="100%" wide />
      <label htmlFor="rot" className="mr-3 ml-2">回転</label>
      <Spin id="rot" value="0.0°" />
      <label className="ml-1.5 flex items-center gap-1.5">
        <span className="relative flex">
          <input type="checkbox" defaultChecked className="h-[13px] w-[13px] appearance-none border border-[#b0b0b0] bg-white" />
          <svg width="13" height="13" viewBox="0 0 13 13" fill="none" aria-hidden="true" className="pointer-events-none absolute inset-0"><path d="M3 6l2.500 4L10 2.500" stroke="#111" strokeWidth="2" /></svg>
        </span>
        レンダ
      </label>
      <button type="button" className="ml-3.5 flex items-center gap-1">
        <svg width="16" height="16" viewBox="0 0 16 16" fill="none" aria-hidden="true"><circle cx="8" cy="8" r="6.500" fill="#777" /><path d="M0 7.500h16M1.500 10.500h13M2 5h12M8 1v14M5 2c-2 4-2 8 0 12M11 2c2 4 2 8 0 12" stroke="#d8d8d8" strokeWidth=".8" /><path d="M0 7.500l1.500-1M16 7.500l-1.500 1" stroke="#555" /></svg>
        EPSG:4326
      </button>
      <button type="button" aria-label="メッセージ" className="mx-5">
        <svg width="17" height="16" viewBox="0 0 17 16" aria-hidden="true"><path d="M8.500 1C13 1 16.500 3.500 16.500 7c0 2-1 4-2.500 5v4l-4-3c-5.500.5-9.500-2-9.500-6 0-3.500 3.500-6 8-6z" fill="#5c5c5c" /><circle cx="5" cy="7" r="1.100" fill="#fff" /><circle cx="8.500" cy="7" r="1.100" fill="#fff" /><circle cx="12" cy="7" r="1.100" fill="#fff" /></svg>
      </button>
      <svg width="10" height="10" viewBox="0 0 10 10" aria-hidden="true" className="self-end"><path d="M8 0h1v1h-1zM5 3h1v1h-1zM8 3h1v1h-1zM2 6h1v1h-1zM5 6h1v1h-1zM8 6h1v1h-1z" fill="#aaa" /></svg>
    </footer>
  );
}

/* ---------- red pen notes ---------- */

function Notes() {
  return (
    <>
      <svg width="840" height="870" viewBox="0 0 840 870" fill="none" stroke="#f00" strokeWidth="5" strokeLinecap="round" strokeLinejoin="round" aria-hidden="true" className="pointer-events-none absolute -top-px -left-px">
        <path d="M833 371.500L800 376L768 382L740 389L705 400L668 411L628 422L590 433L560 443L545 449L528 457L505 464L488 471L476 479L450 488L430 498L410 508L390 521L376 530L352 541L330 554L316 564L301 577L290 583L273 598L266 607L250 619L240 626L222 644L210 660L201 672L194.500 681" />
        <path d="M197 650.500L195.500 664L194.500 681L207 679L214 681L224 681" />
        <path d="M757 798H711L694 802L683 809L677 817L678 826L686 834L693 839L702 849L713 856L722 857L734 860H757L770 851L772 840L771 823L766 813L762 804L756 798" />
      </svg>
      <p className="pointer-events-none absolute top-[714px] left-[56px] text-[21px] leading-9 font-bold whitespace-nowrap text-[#f00]">OSMファイルのドロップ先</p>
    </>
  );
}

export default function App() {
  return (
    <div className="relative flex h-screen flex-col overflow-hidden border border-[#5c5c5c] bg-[#f0f0f0] font-['Open_Sans','Noto_Sans_CJK_JP',sans-serif] text-[11px] text-black [font-feature-settings:'palt']">
      <header className="flex h-[30px] shrink-0 items-center bg-white pl-2">
        <Logo />
        <h1 className="flex-1 pl-[5px]">*無題のプロジェクト - QGIS</h1>
        <div className="flex">
          <button type="button" aria-label="最小化" className="flex w-[46px] justify-center"><svg width="11" height="11" viewBox="0 0 11 11" stroke="#111"><path d="M0 5.500h10" /></svg></button>
          <button type="button" aria-label="最大化" className="flex w-[46px] justify-center"><svg width="11" height="11" viewBox="0 0 11 11" stroke="#111" fill="none"><path d="M.5.5h10v10h-10z" /></svg></button>
          <button type="button" aria-label="閉じる" className="flex w-[46px] justify-center"><svg width="11" height="11" viewBox="0 0 11 11" stroke="#111" fill="none"><path d="M.5.5l10 10M10.500.5l-10 10" /></svg></button>
        </div>
      </header>
      <nav className="flex h-5 shrink-0 items-center gap-px border-b border-[#d4d4d4] pl-[3px]">
        {menus.map(([name, key]) => (
          <button key={name} type="button" className="px-1.5 whitespace-nowrap">{name}(<u>{key}</u>)</button>
        ))}
      </nav>
      <div className="flex shrink-0 flex-col">
        <Toolbar items={rowOne} label="プロジェクトと地図" />
        <Toolbar items={rowTwo} label="レイヤと編集" />
        <Toolbar items={rowThree} label="OSM" />
      </div>
      <div className="flex min-h-0 flex-1">
        <aside className="flex w-[346px] shrink-0 flex-col">
          <Browser />
          <div className="flex h-[5px] items-center justify-center gap-0.5">
            {[0, 1, 2, 3, 4, 5].map((n) => <span key={n} className="h-px w-px bg-[#a0a0a0]" />)}
          </div>
          <Layers />
        </aside>
        <main aria-label="地図" className="mt-px ml-1.5 flex-1 border border-r-0 border-[#b4b4b4] bg-white" />
      </div>
      <StatusBar />
      <LayerDialog />
      <Notes />
    </div>
  );
}
